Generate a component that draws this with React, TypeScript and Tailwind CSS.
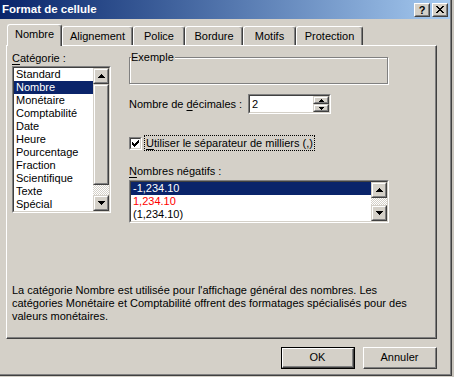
import React from "react";

const raisedOuter = "border border-t-[#d4d0c8] border-l-[#d4d0c8] border-r-[#404040] border-b-[#404040]";
const raisedInner = "border border-t-white border-l-white border-r-[#808080] border-b-[#808080]";

function UpArrow() {
  return (
    <svg width="7" height="4" viewBox="0 0 7 4" shapeRendering="crispEdges">
      <path d="M3 0h1v1h1v1h1v1h1v1H0V3h1V2h1V1h1z" fill="#000" />
    </svg>
  );
}
function DownArrow() {
  return (
    <svg width="7" height="4" viewBox="0 0 7 4" shapeRendering="crispEdges">
      <path d="M0 0h7v1H6v1H5v1H4v1H3V3H2V2H1V1H0z" fill="#000" />
    </svg>
  );
}
function SmallUp() {
  return (
    <svg width="5" height="3" viewBox="0 0 5 3" shapeRendering="crispEdges">
      <path d="M2 0h1v1h1v1h1v1H0V2h1V1h1z" fill="#000" />
    </svg>
  );
}
function SmallDown() {
  return (
    <svg width="5" height="3" viewBox="0 0 5 3" shapeRendering="crispEdges">
      <path d="M0 0h5v1H4v1H3v1H2V2H1V1H0z" fill="#000" />
    </svg>
  );
}

function ScrollBtn({ up }: { up: boolean }) {
  return (
    <div className={`h-[16px] w-[16px] ${raisedOuter}`}>
      <div className={`w-full h-full ${raisedInner} bg-[#d4d0c8] flex items-center justify-center`}>
        {up ? <UpArrow /> : <DownArrow />}
      </div>
    </div>
  );
}

const checker = "bg-[repeating-conic-gradient(#ffffff_0_25%,#d4d0c8_0_50%)] bg-[length:2px_2px]";

const categories = [
  "Standard",
  "Nombre",
  "Monétaire",
  "Comptabilité",
  "Date",
  "Heure",
  "Pourcentage",
  "Fraction",
  "Scientifique",
  "Texte",
  "Spécial",
];

export default function App() {
  return (
    <div className="w-[454px] h-[377px] bg-[#d4d0c8] flex font-['Liberation_Sans',Arial,sans-serif] text-[11px] leading-[13px] text-black">
      <div className="w-[452px] h-[376px] border-r border-b border-[#404040] shrink-0">
        <div className="w-full h-full border-r border-b border-[#808080] flex flex-col">
          {/* Title bar */}
          <div className="h-[19px] shrink-0 flex items-center bg-linear-to-r from-[#0a246a] to-[#a6caf0] pl-[2px] pr-[2px]">
            <span className="flex-1 font-bold text-white text-[11.5px] leading-[13px]">Format de cellule</span>
            <div className="flex gap-[2px]">
              <div className={`w-[16px] h-[14px] border border-t-white border-l-white border-r-[#404040] border-b-[#404040]`}>
                <div className="w-full h-full border border-t-[#d4d0c8] border-l-[#d4d0c8] border-r-[#808080] border-b-[#808080] bg-[#d4d0c8] flex items-center justify-center font-bold text-[11px] leading-[10px] pt-px">
                  ?
                </div>
              </div>
              <div className={`w-[16px] h-[14px] border border-t-white border-l-white border-r-[#404040] border-b-[#404040]`}>
                <div className="w-full h-full border border-t-[#d4d0c8] border-l-[#d4d0c8] border-r-[#808080] border-b-[#808080] bg-[#d4d0c8] flex items-center justify-center">
                  <svg width="8" height="7" viewBox="0 0 8 7" shapeRendering="crispEdges">
                    <path d="M0 0h2v1h1v1h2V1h1V0h2v1H7v1H6v1H5v1h1v1h1v1h1v1H6V6H5V5H3v1H2v1H0V6h1V5h1V4h1V3H2V2H1V1H0z" fill="#000" />
                  </svg>
                </div>
              </div>
            </div>
          </div>

          {/* Tabs */}
          <div className="h-[26px] shrink-0 pt-[5px] pl-[7px] flex items-end">
            <div className="relative z-10 w-[55px] h-[22px] -mb-px bg-[#d4d0c8] border-t border-l border-white border-r border-r-[#404040] rounded-t-[3px] shadow-[inset_-1px_0_0_#808080] flex items-center justify-center pb-[2px]">
              Nombre
            </div>
            <div className="w-[71px] h-[19px] border-t border-l border-white border-r border-r-[#404040] rounded-t-[3px] shadow-[inset_-1px_0_0_#808080] flex items-center justify-center">
              Alignement
            </div>
            <div className="w-[52px] h-[19px] border-t border-l border-white border-r border-r-[#404040] rounded-t-[3px] shadow-[inset_-1px_0_0_#808080] flex items-center justify-center">
              Police
            </div>
            <div className="w-[58px] h-[19px] border-t border-l border-white border-r border-r-[#404040] rounded-t-[3px] shadow-[inset_-1px_0_0_#808080] flex items-center justify-center">
              Bordure
            </div>
            <div className="w-[53px] h-[19px] border-t border-l border-white border-r border-r-[#404040] rounded-t-[3px] shadow-[inset_-1px_0_0_#808080] flex items-center justify-center">
              Motifs
            </div>
            <div className="w-[67px] h-[19px] border-t border-l border-white border-r border-r-[#404040] rounded-t-[3px] shadow-[inset_-1px_0_0_#808080] flex items-center justify-center">
              Protection
            </div>
          </div>

          {/* Panel */}
          <div className="ml-[6px] w-[431px] h-[294px] shrink-0 border-t border-l border-white border-r border-b border-r-[#404040] border-b-[#404040]">
            <div className="w-full h-full border-r border-b border-[#808080] flex flex-col">
              <div className="flex pt-[6px] pl-[5px]">
                {/* Left column */}
                <div className="w-[99px] flex flex-col">
                  <div className="h-[13px]">
                    <span className="underline underline-offset-[2px]">C</span>atégorie :
                  </div>
                  <div className="mt-px h-[147px] border border-t-[#808080] border-l-[#808080] border-r-white border-b-white">
                    <div className="w-full h-full border border-t-[#404040] border-l-[#404040] border-r-[#d4d0c8] border-b-[#d4d0c8] bg-white flex">
                      <div className="flex-1 flex flex-col overflow-hidden">
                        {categories.map((c) =>
                          c === "Nombre" ? (
                            <div key={c} className="h-[13px] pl-[2px] bg-[#0a246a] text-white whitespace-nowrap">
                              {c}
                            </div>
                          ) : (
                            <div key={c} className="h-[13px] pl-[2px] whitespace-nowrap">
                              {c}
                            </div>
                          )
                        )}
                      </div>
                      <div className="w-[16px] flex flex-col">
                        <ScrollBtn up />
                        <div className={`h-[101px] ${raisedOuter}`}>
                          <div className={`w-full h-full ${raisedInner} bg-[#d4d0c8]`} />
                        </div>
                        <div className={`flex-1 ${checker}`} />
                        <ScrollBtn up={false} />
                      </div>
                    </div>
                  </div>
                </div>

                {/* Right column */}
                <div className="ml-[18px] w-[260px] flex flex-col">
                  <div className="relative mt-[5px] w-[259px] h-[27px] border border-[#808080] shadow-[inset_1px_1px_0_#ffffff,1px_1px_0_#ffffff]">
                    <span className="absolute left-px -top-[7px] bg-[#d4d0c8] pr-[1px]">Exemple</span>
                  </div>

                  <div className="mt-[10px] h-[20px] flex items-center">
                    <div className="w-[119px]">
                      Nombre de <span className="underline underline-offset-[2px]">d</span>écimales :
                    </div>
                    <div className="w-[83px] h-[20px] border border-t-[#808080] border-l-[#808080] border-r-white border-b-white">
                      <div className="w-full h-full border border-t-[#404040] border-l-[#404040] border-r-[#d4d0c8] border-b-[#d4d0c8] bg-white flex">
                        <div className="flex-1 pl-[2px] pt-[2px]">2</div>
                        <div className="w-[16px] flex flex-col">
                          <div className={`h-[8px] ${raisedOuter}`}>
                            <div className={`w-full h-full ${raisedInner} bg-[#d4d0c8] flex items-center justify-center`}>
                              <SmallUp />
                            </div>
                          </div>
                          <div className={`h-[8px] ${raisedOuter}`}>
                            <div className={`w-full h-full ${raisedInner} bg-[#d4d0c8] flex items-center justify-center`}>
                              <SmallDown />
                            </div>
                          </div>
                        </div>
                      </div>
                    </div>
                  </div>

                  <div className="mt-[21px] h-[16px] flex items-center">
                    <div className="w-[13px] h-[13px] border border-t-[#808080] border-l-[#808080] border-r-white border-b-white">
                      <div className="w-full h-full border border-t-[#404040] border-l-[#404040] border-r-[#d4d0c8] border-b-[#d4d0c8] bg-white flex items-center justify-center">
                        <svg width="7" height="7" viewBox="0 0 7 7" shapeRendering="crispEdges">
                          <path d="M6 0h1v3H6v1H5v1H4v1H3v1H2V6H1V5H0V2h1v1h1v1h1V3h1V2h1V1h1z" fill="#000" />
                        </svg>
                      </div>
                    </div>
                    <div className="ml-[2px] h-[16px] border border-dotted border-black pl-px pr-px flex items-center">
                      <span>
                        <span className="underline underline-offset-[2px]">U</span>tiliser le séparateur de milliers (,)
                      </span>
                    </div>
                  </div>

                  <div className="mt-[14px] h-[13px]">
                    <span className="underline underline-offset-[2px]">N</span>ombres négatifs :
                  </div>

                  <div className="mt-[2px] w-[260px] h-[43px] border border-t-[#808080] border-l-[#808080] border-r-white border-b-white">
                    <div className="w-full h-full border border-t-[#404040] border-l-[#404040] border-r-[#d4d0c8] border-b-[#d4d0c8] bg-white flex">
                      <div className="flex-1 flex flex-col">
                        <div className="h-[13px] pl-[2px] bg-[#0a246a] text-white">-1,234.10</div>
                        <div className="h-[13px] pl-[2px] text-[#ff0000]">1,234.10</div>
                        <div className="h-[13px] pl-[2px]">(1,234.10)</div>
                      </div>
                      <div className="w-[16px] flex flex-col">
                        <ScrollBtn up />
                        <div className={`flex-1 ${checker}`} />
                        <ScrollBtn up={false} />
                      </div>
                    </div>
                  </div>
                </div>
              </div>

              <div className="mt-auto pb-[14px] pl-[5px] whitespace-nowrap">
                La catégorie Nombre est utilisée pour l'affichage général des nombres. Les
                <br />
                catégories Monétaire et Comptabilité offrent des formatages spécialisés pour des
                <br />
                valeurs monétaires.
              </div>
            </div>
          </div>

          {/* Buttons */}
          <div className="mt-[8px] pr-[13px] flex justify-end gap-[8px]">
            <div className="w-[74px] h-[22px] border border-black">
              <div className="w-full h-full border border-t-white border-l-white border-r-[#404040] border-b-[#404040]">
                <div className="w-full h-full border-r border-b border-[#808080] flex items-center justify-center">
                  OK
                </div>
              </div>
            </div>
            <div className="w-[74px] h-[22px] border border-t-white border-l-white border-r-[#404040] border-b-[#404040]">
              <div className="w-full h-full border-r border-b border-[#808080] flex items-center justify-center">
                Annuler
              </div>
            </div>
          </div>
        </div>
      </div>
      <div className="w-[2px] h-full bg-[#c8c4bc]" />
    </div>
  );
}
